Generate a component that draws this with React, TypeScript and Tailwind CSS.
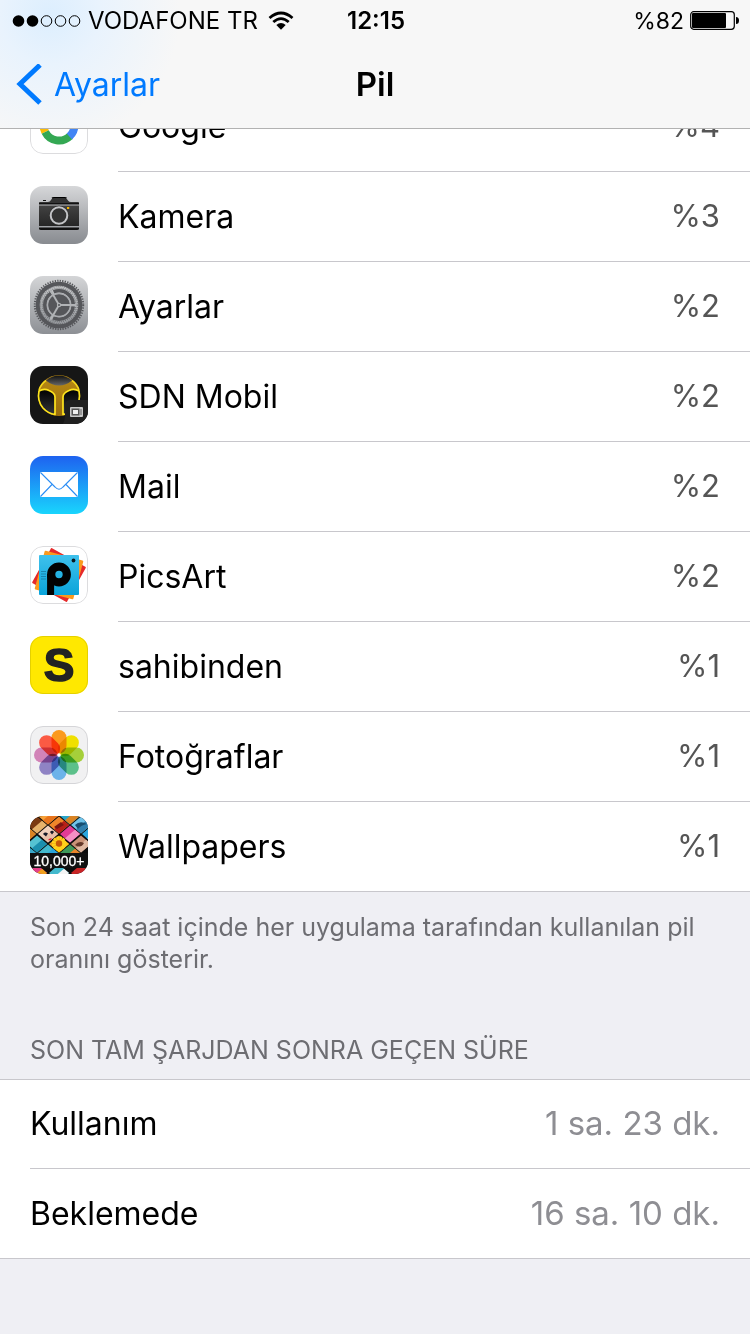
import type { ReactNode } from "react";

function AppIcon({ children }: { children: ReactNode }) {
  return (
    <svg
      viewBox="0 0 58 58"
      aria-hidden="true"
      className="mt-3.5 size-[58px] shrink-0 overflow-hidden rounded-[13px]"
    >
      {children}
    </svg>
  );
}

function IconOutline({ color = "#dcdcde" }: { color?: string }) {
  return (
    <rect x="0.5" y="0.5" width="57" height="57" rx="12.5" fill="none" stroke={color} />
  );
}

function GoogleIcon() {
  return (
    <AppIcon>
      <rect width="58" height="58" fill="#fff" />
      <g fill="none" strokeWidth="8">
        <path d="M40 17.5A15.500 15.500 0 0 0 15.500 21.500" stroke="#ea4335" />
        <path d="M15.500 21.500A15.500 15.500 0 0 0 15.200 36" stroke="#fbbc05" />
        <path d="M15.200 36A15.500 15.500 0 0 0 40 40" stroke="#34a853" />
        <path d="M39.400 40.500A15.500 15.500 0 0 0 44.500 29H29" stroke="#4285f4" />
      </g>
      <IconOutline />
    </AppIcon>
  );
}

function CameraIcon() {
  return (
    <AppIcon>
      <defs>
        <linearGradient id="cam-bg" x1="0" y1="0" x2="0" y2="1">
          <stop offset="0" stopColor="#d6d7d9" />
          <stop offset="1" stopColor="#888b90" />
        </linearGradient>
        <linearGradient id="cam-body" x1="0" y1="0" x2="0" y2="1">
          <stop offset="0" stopColor="#424242" />
          <stop offset="1" stopColor="#262626" />
        </linearGradient>
      </defs>
      <rect width="58" height="58" fill="url(#cam-bg)" />
      <path d="M9 17V16.500Q9 16 10 16H18Q20 16 21 14L22 12.500Q22.500 11.500 24 11.500H34.500Q36 11.500 36.500 12.500L38 14.500Q39 16 41 16H48Q49 16 49 16.500V17Z" fill="#333" />
      <path d="M22 12Q22.500 11.500 24 11.500H34.500Q36 11.500 36.500 12" stroke="#000" strokeWidth="1.200" fill="none" />
      <rect x="13" y="14" width="3" height="1" fill="#111" />
      <rect x="9" y="17" width="40" height="1.500" fill="#111" />
      <rect x="9" y="19.500" width="40" height="20.500" fill="url(#cam-body)" />
      <path d="M9 41.500H49V42.500Q49 44 47 44H11Q9 44 9 42.500Z" fill="#111" />
      <circle cx="29" cy="29.500" r="9.800" fill="#303030" />
      <circle cx="29" cy="29.500" r="8.300" fill="#333" stroke="#c3c4c7" strokeWidth="2" />
      <rect x="37" y="21" width="2.200" height="2" fill="#f5b400" />
    </AppIcon>
  );
}

function SettingsIcon() {
  return (
    <AppIcon>
      <defs>
        <linearGradient id="set-bg" x1="0" y1="0" x2="0" y2="1">
          <stop offset="0" stopColor="#d4d5d7" />
          <stop offset="1" stopColor="#8d9095" />
        </linearGradient>
      </defs>
      <rect width="58" height="58" fill="url(#set-bg)" />
      <g fill="none" stroke="#55565a">
        <circle cx="29" cy="29" r="24.200" strokeWidth="2" strokeDasharray="1.270 1.264" />
        <circle cx="29" cy="29" r="21.300" strokeWidth="4" />
        <circle cx="29" cy="29" r="14.200" strokeWidth="3.600" strokeDasharray="26.740 3" strokeDashoffset="-1.500" />
        <circle cx="29" cy="29" r="16.700" strokeWidth="1.400" strokeDasharray="1.100 1" opacity="0.600" />
        <circle cx="29" cy="29" r="18.700" strokeWidth="1.200" strokeDasharray="1.100 1" opacity="0.600" />
      </g>
      <circle cx="29" cy="29" r="11" fill="#55565a" />
      <circle cx="29" cy="29" r="11.500" fill="none" stroke="#a9abaf" strokeWidth="1.400" />
      <g stroke="#b1b3b6" strokeWidth="1.900">
        <path d="M29 29H46" />
        <path d="M29 29L20.500 14.300" />
        <path d="M29 29L20.500 43.700" />
      </g>
      <circle cx="29" cy="29" r="2.200" fill="#b1b3b6" />
      <circle cx="29" cy="29" r="1" fill="#55565a" />
    </AppIcon>
  );
}

function SdnIcon() {
  return (
    <AppIcon>
      <defs>
        <linearGradient id="sdn-gold" x1="0" y1="0" x2="0" y2="1">
          <stop offset="0" stopColor="#b98a14" />
          <stop offset="1" stopColor="#9a6d0c" />
        </linearGradient>
        <linearGradient id="sdn-shine" x1="0" y1="0" x2="0" y2="1">
          <stop offset="0" stopColor="#111" />
          <stop offset="1" stopColor="#666" />
        </linearGradient>
        <linearGradient id="sdn-panel" x1="0" y1="0" x2="0" y2="1">
          <stop offset="0" stopColor="#000" />
          <stop offset="1" stopColor="#34363a" />
        </linearGradient>
      </defs>
      <rect width="58" height="58" fill="#161616" />
      <ellipse cx="29" cy="29.500" rx="21" ry="20.500" fill="url(#sdn-gold)" />
      <path d="M16 14.500Q22 9.500 29 9.500T42 14.500Q36 19.500 29 19.500T16 14.500Z" fill="url(#sdn-shine)" />
      <g fill="url(#sdn-panel)" stroke="#ffe51d" strokeWidth="1.700" strokeLinejoin="round">
        <path d="M9 25Q14 22 19 24.500Q25 27 25 31V48.500Q18 47.500 13 42Q7 35 9 25Z" />
        <path d="M49 25Q44 22 39 24.500Q33 27 33 31V48.500Q40 47.500 45 42Q51 35 49 25Z" />
      </g>
      <path d="M9 24Q11 18 16 14.500M49 24Q47 18 42 14.500" fill="none" stroke="#f4d51c" strokeWidth="1.600" />
      <path d="M58 34H40Q35 34 35 40V50Q35 54 33 58H58Z" fill="#202020" />
      <rect x="40" y="41" width="13" height="10" rx="1" fill="#c9c9c9" />
      <rect x="41.500" y="42.500" width="8" height="7" fill="#555" />
      <rect x="43" y="44" width="5" height="4" fill="#eee" />
      <path d="M51 43V49" stroke="#666" />
    </AppIcon>
  );
}

function MailIcon() {
  return (
    <AppIcon>
      <defs>
        <linearGradient id="mail-bg" x1="0" y1="0" x2="0" y2="1">
          <stop offset="0" stopColor="#1e62f0" />
          <stop offset="1" stopColor="#19d5fd" />
        </linearGradient>
      </defs>
      <rect width="58" height="58" fill="url(#mail-bg)" />
      <rect x="10" y="16" width="38" height="25" rx="1" fill="#fff" />
      <g fill="none" stroke="#2b8df5" strokeWidth="1.100">
        <path d="M10.500 16.500L25 31Q29 35.500 33 31L47.500 16.500" />
        <path d="M10.500 40.500L22 28.500M47.500 40.500L36 28.500" />
      </g>
    </AppIcon>
  );
}

function PicsArtIcon() {
  return (
    <AppIcon>
      <defs>
        <linearGradient id="pics-bg" x1="0" y1="0" x2="0" y2="1">
          <stop offset="0" stopColor="#3fc1ec" />
          <stop offset="1" stopColor="#0aa4da" />
        </linearGradient>
      </defs>
      <rect width="58" height="58" fill="#fff" />
      <rect x="9" y="9" width="40" height="40" rx="1" fill="#e62a2a" transform="rotate(29 29 29)" />
      <rect x="9" y="9" width="40" height="40" rx="1" fill="#fb9a1d" transform="rotate(15 29 29)" />
      <rect x="9" y="9" width="40" height="40" rx="1" fill="url(#pics-bg)" />
      <path d="M11 25.500H16M11 28H16M11 30.500H16M11 33H16" stroke="#177fa8" strokeWidth="0.900" />
      <circle cx="43.500" cy="14.500" r="1.900" fill="#0a1a22" />
      <circle cx="29" cy="28.500" r="7.800" fill="none" stroke="#020202" strokeWidth="8.200" />
      <rect x="17.100" y="28" width="7" height="21" fill="#020202" />
      <IconOutline />
    </AppIcon>
  );
}

function SahibindenIcon() {
  return (
    <AppIcon>
      <rect width="58" height="58" fill="#ffe800" />
      <text
        x="29"
        y="45"
        textAnchor="middle"
        fontFamily="Liberation Sans, sans-serif"
        fontWeight="700"
        fontSize="46"
        fill="#222"
        stroke="#222"
        strokeWidth="1.500"
      >
        S
      </text>
      <IconOutline color="#e4d000" />
    </AppIcon>
  );
}

const PETALS = ["#fb9a1e", "#f0e000", "#a5cf3a", "#5cc08a", "#6cb3ea", "#8f83c4", "#d284b8", "#fb5a44"];

function PhotosIcon() {
  return (
    <AppIcon>
      <rect width="58" height="58" fill="#f1f1f2" />
      <g className="isolate">
        {PETALS.map((color, i) => (
          <rect
            key={color}
            x="21.500"
            y="4"
            width="15"
            height="23.500"
            rx="7.500"
            fill={color}
            transform={`rotate(${i * 45} 29 29)`}
            className="mix-blend-multiply"
          />
        ))}
      </g>
      <circle cx="29" cy="29" r="1.500" fill="#fff" />
      <IconOutline color="#d5d5d8" />
    </AppIcon>
  );
}

// x, y, base colour, lower right half
const TILES: [number, number, string, string][] = [
  [-4, 0, "#c98a3a", "#7a3c15"],
  [18, 0, "#f7a23a", "#e8741c"],
  [40, 0, "#2aa5c8", "#d98324"],
  [62, 0, "#bfe4f5", "#38b8e0"],
  [7, 9, "#7b3a12", "#e6b26b"],
  [29, 9, "#f0862a", "#b81f18"],
  [51, 9, "#6fc3ea", "#2f7fae"],
  [-4, 18, "#e9a34a", "#d98324"],
  [18, 18, "#f1d1bd", "#e9bfa8"],
  [40, 18, "#e23b96", "#f48fc4"],
  [62, 18, "#2aa5dd", "#6fc3ea"],
  [7, 28, "#55c2d2", "#1b8fae"],
  [29, 28, "#f0a01e", "#ffc914"],
  [51, 28, "#c99277", "#e0b9a2"],
  [-4, 37, "#1b99b1", "#39a8cb"],
  [18, 37, "#43b9cd", "#2aa5dd"],
  [40, 37, "#3f9a5b", "#e9842a"],
  [7, 57, "#e5408a", "#f0a01e"],
  [29, 57, "#43b9cd", "#f4f4f4"],
  [51, 57, "#c92525", "#e5408a"],
];

function WallpapersIcon() {
  return (
    <AppIcon>
      <rect width="58" height="58" fill="#0c0c0c" />
      {TILES.map(([x, y, base, half]) => (
        <g key={`${x},${y}`} transform={`translate(${x} ${y})`}>
          <path d="M0 -8.600L10 0L0 8.600L-10 0Z" fill={base} />
          <path d="M5 -4.300L10 0L0 8.600L-5 4.300Z" fill={half} />
        </g>
      ))}
      <path d="M13 18Q15 15.500 18 17.500L16 20.500ZM20 16Q22 13.500 24 16L22 18.500Z" fill="#171b29" />
      <path d="M18 24Q20 21.500 22 22.500Q21 25 18 24Z" fill="#d81c2d" />
      <path d="M45 9Q50 4 57 8Q51 9 48 13Z" fill="#174f72" />
      <path d="M24 11L31 6L34 9L27 13Z" fill="#7b1612" />
      <circle cx="29" cy="27.500" r="5" fill="none" stroke="#ffd21c" strokeWidth="4.500" strokeDasharray="2.100 0.500" />
      <circle cx="29" cy="27.500" r="3.200" fill="#c65a08" />
      <path d="M45 29Q49 24 54 27Q51 33 45 29Z" fill="#643728" />
      <rect y="37" width="58" height="15" fill="#111" />
      <text
        x="29"
        y="50"
        textAnchor="middle"
        fontFamily="Liberation Sans, sans-serif"
        fontSize="14"
        fill="#fff"
        stroke="#fff"
        strokeWidth="0.300"
      >
        10,000+
      </text>
    </AppIcon>
  );
}

const apps = [
  { name: "Google", usage: "%4", icon: GoogleIcon },
  { name: "Kamera", usage: "%3", icon: CameraIcon },
  { name: "Ayarlar", usage: "%2", icon: SettingsIcon },
  { name: "SDN Mobil", usage: "%2", icon: SdnIcon },
  { name: "Mail", usage: "%2", icon: MailIcon },
  { name: "PicsArt", usage: "%2", icon: PicsArtIcon },
  { name: "sahibinden", usage: "%1", icon: SahibindenIcon },
  { name: "Fotoğraflar", usage: "%1", icon: PhotosIcon },
  { name: "Wallpapers", usage: "%1", icon: WallpapersIcon },
];

const times = [
  { label: "Kullanım", value: "1 sa. 23 dk." },
  { label: "Beklemede", value: "16 sa. 10 dk." },
];

function StatusBar() {
  return (
    <div className="grid h-[42px] grid-cols-[1fr_auto_1fr] items-center pr-2.5 pl-3 text-[24px]">
      <div className="flex items-center">
        <svg width="70" height="14" viewBox="0 0 70 14" aria-hidden="true">
          <circle cx="6.500" cy="7" r="5.800" />
          <circle cx="20.500" cy="7" r="5.800" />
          <g fill="none" stroke="#000">
            <circle cx="34.500" cy="7" r="5.300" />
            <circle cx="48.500" cy="7" r="5.300" />
            <circle cx="62.500" cy="7" r="5.300" />
          </g>
        </svg>
        <span className="ml-1.5">VODAFONE TR</span>
        <svg width="26" height="20" viewBox="0 0 26 20" className="ml-2.5" aria-hidden="true">
          <g fill="none" stroke="#000" strokeWidth="2.800">
            <path d="M1.500 7Q13 -3 24.500 7" />
            <path d="M5.300 11Q13 4.200 20.700 11" />
          </g>
          <path d="M8.300 14Q13 10 17.700 14L13 18.800Z" />
        </svg>
      </div>
      <span className="font-semibold">12:15</span>
      <div className="flex items-center justify-end">
        <span className="text-[23px]">%82</span>
        <svg width="50" height="20" viewBox="0 0 50 20" className="ml-1.5" aria-hidden="true">
          <rect x="0.700" y="0.700" width="43.600" height="17.600" rx="3" fill="none" stroke="#000" strokeWidth="1.200" />
          <rect x="2" y="2" width="34" height="15" rx="1" />
          <path d="M46 6Q49 6 49 9.500T46 13Z" />
        </svg>
      </div>
    </div>
  );
}

export default function App() {
  return (
    <div className="min-h-screen bg-[#efeff4] font-['Inter','Liberation_Sans',sans-serif] text-black">
      <header className="sticky top-0 z-10 border-b border-[#b2b2b2] bg-[#f7f7f7] bg-[radial-gradient(circle_at_50px_15px,#dceefe_0,#e9f3fd_50px,#f7f7f7_130px)]">
        <StatusBar />
        <nav className="grid h-[86px] grid-cols-[1fr_auto_1fr] items-center px-4">
          <button type="button" className="flex items-center gap-3 text-[32px] text-[#007aff]">
            <svg width="26" height="42" viewBox="0 0 26 42" aria-hidden="true">
              <path d="M24 1L4 20L24 39" fill="none" stroke="#007aff" strokeWidth="5" />
            </svg>
            Ayarlar
          </button>
          <h1 className="text-[33px] font-semibold">Pil</h1>
        </nav>
      </header>

      <main>
        {/* the first row is scrolled partly under the header */}
        <ul className="-mt-[47px] bg-white">
          {apps.map(({ name, usage, icon: Icon }) => (
            <li key={name} className="group flex h-[90px] border-[#c8c7cc] pl-[30px] last:border-b">
              <Icon />
              <div className="ml-[30px] flex flex-1 items-center justify-between border-b border-[#c8c7cc] pr-[30px] text-[32px] group-last:border-b-0">
                <span>{name}</span>
                <span className="text-[31px] text-[#555]">{usage}</span>
              </div>
            </li>
          ))}
        </ul>
        <p className="px-[30px] pt-[19px] text-[25px] leading-8 text-[#6d6d72]">
          Son 24 saat içinde her uygulama tarafından kullanılan pil oranını gösterir.
        </p>

        <section>
          <h2 className="px-[30px] pt-[59px] pb-[13px] text-[25px] leading-8 text-[#6d6d72]">
            SON TAM ŞARJDAN SONRA GEÇEN SÜRE
          </h2>
          <dl className="divide-y divide-[#c8c7cc] border-y border-[#c8c7cc] bg-white pl-[30px] text-[32px]">
            {times.map(({ label, value }) => (
              <div key={label} className="flex h-[89px] items-center justify-between pr-[30px]">
                <dt>{label}</dt>
                <dd className="text-[33px] text-[#8e8e93]">{value}</dd>
              </div>
            ))}
          </dl>
        </section>
      </main>
    </div>
  );
}
